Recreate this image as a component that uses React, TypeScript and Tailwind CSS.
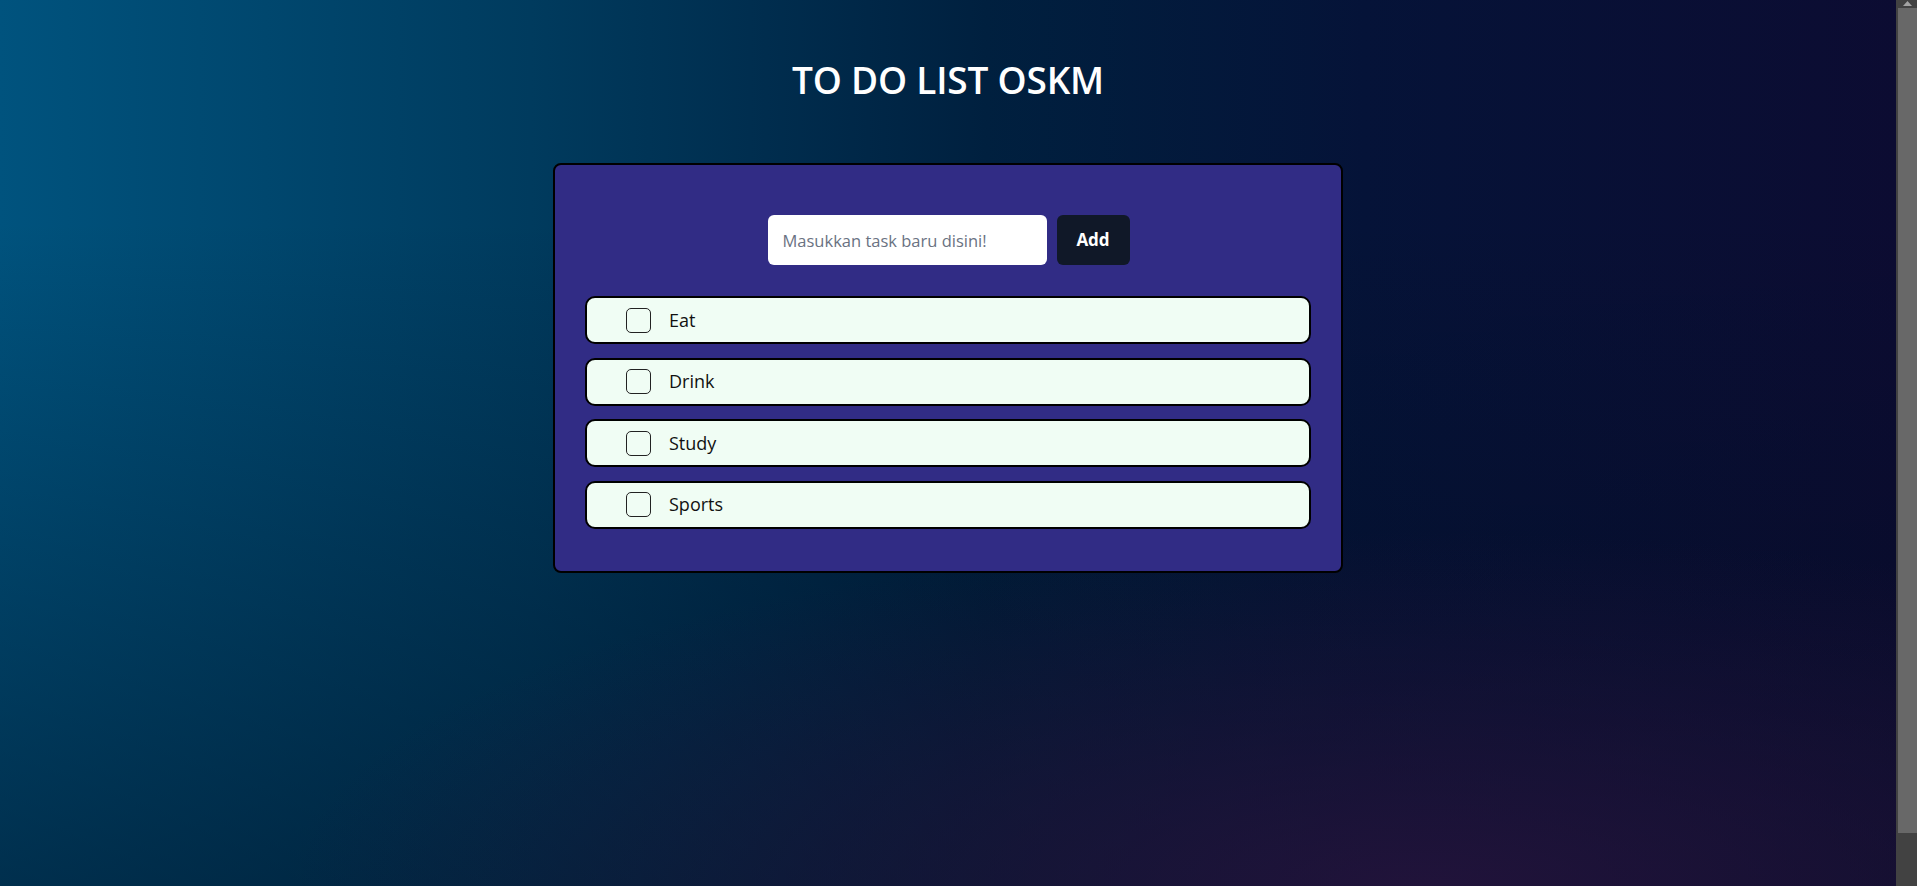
import React from "react";

const tasks = ["Eat", "Drink", "Study", "Sports"];

export default function App() {
  return (
    <div className="h-screen w-full flex overflow-hidden font-['Open_Sans','Noto_Sans',sans-serif]">
      <div className="flex-1 h-full overflow-hidden bg-[radial-gradient(60%_40%_at_75%_100%,rgba(40,20,62,0.8)_0%,rgba(40,20,62,0)_100%),linear-gradient(to_bottom,rgba(0,20,40,0)_25%,rgba(0,12,30,0.5)_100%),linear-gradient(to_right,#00537e_0%,#003b5e_28%,#00203f_52%,#051338_72%,#0c0c32_100%)]">
        <div className="min-h-[950px] flex flex-col items-center">
          <h1 className="mt-[60px] text-[37px] leading-[40px] font-semibold text-white tracking-[-0.2px]">
            TO DO LIST OSKM
          </h1>
          <div className="mt-[63px] w-[790px] border-2 border-black rounded-lg bg-indigo-900 pt-[50px] pb-[42px] px-[30px] flex flex-col items-center">
            <div className="flex items-center gap-[10px] pl-[1px]">
              <input
                type="text"
                placeholder="Masukkan task baru disini!"
                className="w-[279px] h-[50px] rounded-md bg-white pl-[15px] text-[16.5px] text-gray-900 placeholder:text-gray-500 outline-none"
              />
              <button className="w-[73px] h-[50px] rounded-md bg-gray-900 text-white font-bold text-[17px]">
                Add
              </button>
            </div>
            <ul className="mt-[31px] w-full flex flex-col gap-[13.5px]">
              {tasks.map((t) => (
                <li
                  key={t}
                  className="h-12 w-full border-2 border-black rounded-[10px] bg-green-50 flex items-center pl-[39px]"
                >
                  <input
                    type="checkbox"
                    className="appearance-none w-[25px] h-[25px] border border-[#222] rounded-[5px] bg-transparent shrink-0"
                  />
                  <span className="ml-[18px] text-[18px] text-[#111]">{t}</span>
                </li>
              ))}
            </ul>
          </div>
        </div>
      </div>
      <div className="w-[21px] h-full bg-[#424242] flex flex-col shrink-0">
        <div className="h-[8px] flex items-start justify-center pl-[2px]">
          <svg width="9" height="5" viewBox="0 0 9 5" className="mt-[1px]">
            <path d="M4.5 0 L9 5 L0 5 Z" fill="#a3a3a3" />
          </svg>
        </div>
        <div className="ml-[2px] h-[825px] bg-[#686868]" />
      </div>
    </div>
  );
}
